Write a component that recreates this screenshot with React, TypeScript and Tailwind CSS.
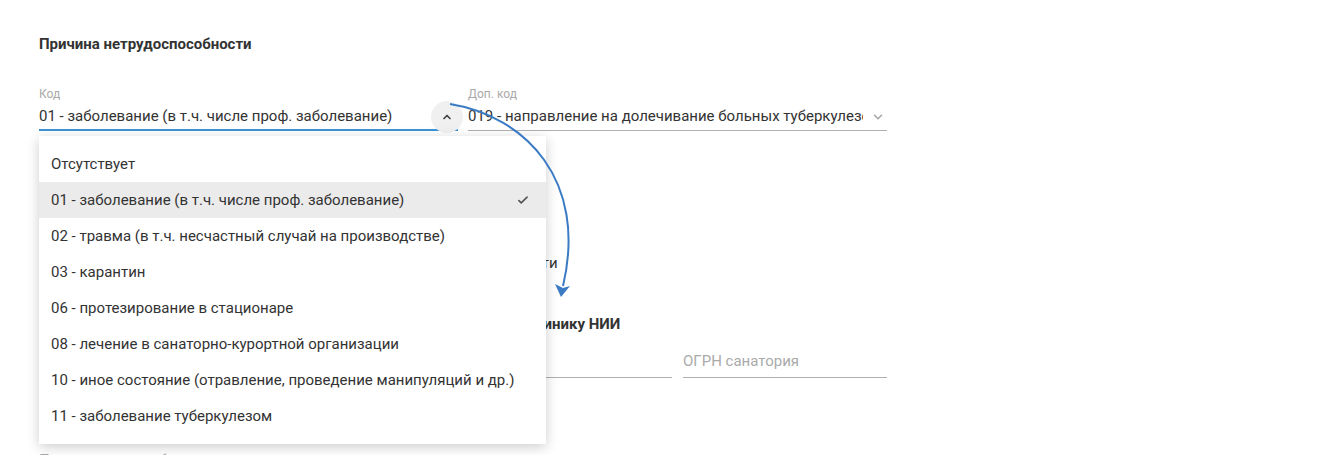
import React from "react";

const OPTIONS = [
  "Отсутствует",
  "01 - заболевание (в т.ч. числе проф. заболевание)",
  "02 - травма (в т.ч. несчастный случай на производстве)",
  "03 - карантин",
  "06 - протезирование в стационаре",
  "08 - лечение в санаторно-курортной организации",
  "10 - иное состояние (отравление, проведение манипуляций и др.)",
  "11 - заболевание туберкулезом",
];

const SELECTED = 1;

function ChevronUp() {
  return (
    <svg width="12" height="12" viewBox="0 0 24 24" fill="none" stroke="#444" strokeWidth="3.4" strokeLinecap="round" strokeLinejoin="round">
      <path d="M6 15l6-6 6 6" />
    </svg>
  );
}

function ChevronDown() {
  return (
    <svg width="14" height="14" viewBox="0 0 24 24" fill="none" stroke="#a8a8a8" strokeWidth="2.8" strokeLinecap="round" strokeLinejoin="round">
      <path d="M6 9l6 6 6-6" />
    </svg>
  );
}

function Check() {
  return (
    <svg width="14" height="14" viewBox="0 0 24 24" fill="none" stroke="#555" strokeWidth="2.8" strokeLinecap="round" strokeLinejoin="round">
      <path d="M5 13l4 4 10-10" />
    </svg>
  );
}

function Menu() {
  return (
    <div className="absolute left-[39px] top-[136px] z-10 w-[507px] bg-white py-[10px] shadow-[0_3px_12px_rgba(0,0,0,0.2)]">
      {OPTIONS.map((o, i) => (
        <div
          key={o}
          className={
            "flex h-[36px] items-center justify-between px-[12px] text-[15px] text-[#333] " +
            (i === SELECTED ? "bg-[#ebebeb]" : "")
          }
        >
          <span>{o}</span>
          {i === SELECTED && (
            <span className="mr-[4px]">
              <Check />
            </span>
          )}
        </div>
      ))}
    </div>
  );
}

function Arrow() {
  return (
    <svg className="pointer-events-none absolute left-0 top-0 z-20" width="1341" height="455">
      <path d="M450 104 C 525 116, 588 180, 563 286" fill="none" stroke="#3a7bc4" strokeWidth="2" />
      <path d="M561 297 L555 284 L563 288 L570 286 Z" fill="#3a7bc4" />
    </svg>
  );
}

export default function App() {
  return (
    <div
      className="relative h-[455px] w-full overflow-hidden bg-white pl-[39px] pt-[35px] text-[#333]"
      style={{ fontFamily: "Roboto, 'Noto Sans', sans-serif" }}
    >
      <h3 className="text-[15px] font-bold leading-[18px] text-[#333]">Причина нетрудоспособности</h3>

      <div className="mt-[34px] grid w-[848px] grid-cols-2 gap-[10px]">
        <div className="relative">
          <div className="text-[12px] leading-[14px] text-[#aaa]">Код</div>
          <div className="flex h-[30px] items-center border-b-2 border-[#3d93d8] pt-[2px] text-[15px] text-[#333]">
            01 - заболевание (в т.ч. числе проф. заболевание)
          </div>
          <button className="absolute right-[-5px] top-[14px] flex h-[32px] w-[32px] items-center justify-center rounded-full bg-[#f0f0f0]">
            <ChevronUp />
          </button>
        </div>
        <div>
          <div className="text-[12px] leading-[14px] text-[#aaa]">Доп. код</div>
          <div className="flex h-[30px] items-center gap-[8px] border-b border-[#b0b0b0] pt-[2px] text-[15px] text-[#333]">
            <span className="flex-1 overflow-hidden whitespace-nowrap">
              019 - направление на долечивание больных туберкулезом
            </span>
            <span className="mr-[2px]">
              <ChevronDown />
            </span>
          </div>
        </div>
      </div>

      <div className="mt-[123px] flex items-center gap-[10px] text-[15px] leading-[18px]">
        <span className="h-[18px] w-[18px] rounded-sm border-2 border-[#888]" />
        <span>Поставлена на учет в медорганизации в ранние сроки беременности</span>
      </div>

      <h3 className="mt-[43px] text-[15px] font-bold leading-[18px]">
        Направление на долечивание в санаторно-курортную организацию, клинику НИИ
      </h3>

      <div className="mt-[9px] flex w-[848px] gap-[11px]">
        <div className="flex h-[36px] w-[633px] items-center border-b border-[#b0b0b0] pt-[4px] text-[15px] text-[#aaa]">
          Наименование санатория
        </div>
        <div className="flex h-[36px] flex-1 items-center border-b border-[#b0b0b0] pt-[4px] text-[15px] text-[#aaa]">
          ОГРН санатория
        </div>
      </div>

      <div className="mt-[71px] text-[15px] text-[#aaa]">Получатель пособия</div>

      <Menu />
      <Arrow />
    </div>
  );
}
